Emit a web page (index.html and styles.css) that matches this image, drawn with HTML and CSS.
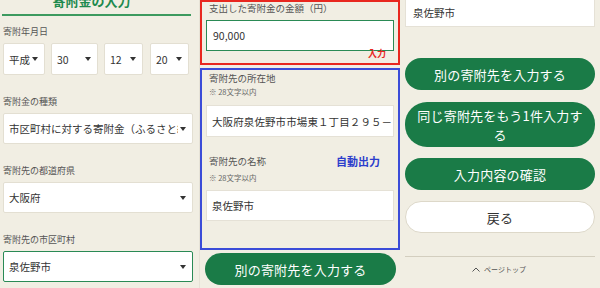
FILE: index.html
```html
<!DOCTYPE html>
<html lang="ja">
<head>
<meta charset="utf-8">
<link rel="stylesheet" href="styles.css">
</head>
<body>
<div class="screens">
  <section class="panel p1">
    <h1 class="title">寄附金の入力</h1>
    <div class="rule"></div>
    <div class="field first">
      <div class="label">寄附年月日</div>
      <div class="date-row">
        <div class="select w-era"><span class="val">平成</span><i class="arrow"></i></div>
        <div class="select w-yr"><span class="val">30</span><i class="arrow"></i></div>
        <div class="select w-md"><span class="val">12</span><i class="arrow"></i></div>
        <div class="select w-md"><span class="val">20</span><i class="arrow"></i></div>
      </div>
    </div>
    <div class="field">
      <div class="label">寄附金の種類</div>
      <div class="select"><span class="val">市区町村に対する寄附金（ふるさと納税）</span><i class="arrow"></i></div>
    </div>
    <div class="field">
      <div class="label">寄附先の都道府県</div>
      <div class="select"><span class="val">大阪府</span><i class="arrow"></i></div>
    </div>
    <div class="field">
      <div class="label">寄附先の市区町村</div>
      <div class="select active"><span class="val">泉佐野市</span><i class="arrow"></i></div>
    </div>
  </section>

  <section class="panel p2">
    <div class="redbox">
      <div class="label2 first-label">支出した寄附金の金額（円）</div>
      <div class="input active">90,000</div>
      <div class="note-red">入力</div>
    </div>
    <div class="bluebox">
      <div class="label2 addr-label">寄附先の所在地</div>
      <div class="hint">※ 28文字以内</div>
      <div class="input addr">大阪府泉佐野市市場東１丁目２９５－３</div>
      <div class="label-row">
        <span class="label2">寄附先の名称</span>
        <span class="note-blue">自動出力</span>
      </div>
      <div class="hint">※ 28文字以内</div>
      <div class="input name">泉佐野市</div>
    </div>
    <div class="btn green p2btn">別の寄附先を入力する</div>
  </section>

  <section class="panel p3">
    <div class="input top">泉佐野市</div>
    <div class="btn green b1">別の寄附先を入力する</div>
    <div class="btn green b2">同じ寄附先をもう1件入力する</div>
    <div class="btn green b3">入力内容の確認</div>
    <div class="btn white b4">戻る</div>
    <div class="divider"></div>
    <div class="pagetop">
      <svg class="caret" width="8" height="5" viewBox="0 0 8 5"><path d="M0.5 4.5 L4 1 L7.5 4.5" fill="none" stroke="#555" stroke-width="1"/></svg>
      <span>ページトップ</span>
    </div>
  </section>
</div>
</body>
</html>
```

FILE: styles.css
```css
* { box-sizing: border-box; margin: 0; padding: 0; }

body {
  margin: 0;
  width: 600px;
  height: 288px;
  overflow: hidden;
  background: #f1eee3;
  font-family: "Noto Sans CJK JP", "Noto Sans", sans-serif;
  color: #333;
}

.screens {
  display: grid;
  grid-template-columns: 200px 200px 200px;
  height: 288px;
}

.panel {
  height: 288px;
  overflow: hidden;
  display: flex;
  flex-direction: column;
}

/* ---------- panel 1 ---------- */
.p1 {
  padding: 0 6px 0 2px;
  border-right: 1px solid #e6e2d6;
}

.title {
  margin-top: -8px;
  height: 18px;
  line-height: 18px;
  font-size: 13px;
  font-weight: bold;
  color: #1e8a4e;
  text-align: center;
  padding-right: 12px;
}

.rule {
  margin-top: 4px;
  height: 2px;
  background: #3d9a5f;
  margin-right: 2px;
}

.field { margin-top: 19px; display: flex; flex-direction: column; }
.field.first { margin-top: 8px; }

.label {
  height: 16px;
  line-height: 16px;
  font-size: 9px;
  color: #555;
  margin-left: 1px;
  margin-bottom: 3px;
}

.date-row {
  display: flex;
  gap: 6px;
  margin-left: 1px;
}

.select {
  height: 31px;
  background: #fff;
  border: 1px solid #e3dfd2;
  border-radius: 2px;
  display: flex;
  align-items: center;
  padding: 0 6px 0 5px;
  font-size: 10.5px;
  color: #333;
  margin-left: 1px;
}
.date-row .select { margin-left: 0; height: 32px; }
.select .val {
  flex: 1;
  overflow: hidden;
  white-space: nowrap;
}
.select .arrow {
  flex: none;
  width: 0;
  height: 0;
  border-top: 4px solid #333;
  border-left: 3px solid transparent;
  border-right: 3px solid transparent;
  margin-left: 2px;
}
.select.active { border: 1.5px solid #2a8a55; }

.w-era { width: 42px; }
.w-yr { width: 47px; }
.w-md { width: 39px; }
.date-row .w-md:last-child { margin-left: 1px; }

/* ---------- panel 2 ---------- */
.redbox {
  height: 65px;
  border: 2px solid #e8271f;
  padding: 0 4px;
  display: flex;
  flex-direction: column;
}

.label2 {
  line-height: 16px;
  height: 16px;
  font-size: 9.5px;
  color: #555;
  margin-left: 3px;
}
.first-label { margin-top: -2px; }

.input {
  height: 31px;
  background: #fff;
  border: 1px solid #e5e1d6;
  display: flex;
  align-items: center;
  padding-left: 5px;
  font-size: 10.5px;
  color: #333;
  white-space: nowrap;
  overflow: hidden;
}
.input.active {
  margin-top: 4px;
  border: 1.5px solid #2a8a55;
  padding-left: 6px;
}

.note-red {
  align-self: flex-end;
  margin-top: -2px;
  margin-right: 8px;
  font-size: 9px;
  line-height: 10px;
  font-weight: bold;
  color: #e8271f;
}

.bluebox {
  margin-top: 3px;
  height: 182px;
  border: 2px solid #3b4cd8;
  padding: 0 4px;
  display: flex;
  flex-direction: column;
}

.hint {
  line-height: 12px;
  height: 12px;
  font-size: 7.5px;
  color: #666;
  margin-left: 3px;
}

.input.addr { margin-top: 7px; height: 32px; letter-spacing: 0.1px; }

.label-row {
  margin-top: 16px;
  display: flex;
  justify-content: space-between;
  align-items: center;
  padding-right: 14px;
  margin-bottom: 3px;
}
.note-blue {
  font-size: 11px;
  font-weight: bold;
  color: #2c3dcc;
  line-height: 16px;
}

.input.name { margin-top: 6px; }

.btn {
  height: 32px;
  border-radius: 16px;
  display: flex;
  align-items: center;
  justify-content: center;
  text-align: center;
  font-size: 13px;
  letter-spacing: 0.2px;
  flex: none;
}
.btn.green { background: #1a7b47; color: #fff; }
.btn.white {
  background: #fff;
  color: #333;
  border: 1px solid #ddd8c9;
}

.p2btn { margin: 3px 4px 0 5px; }

/* ---------- panel 3 ---------- */
.p3 { padding: 0 5px; }

.input.top {
  margin-top: -5px;
  height: 32px;
  padding-left: 7px;
  padding-top: 2px;
  flex: none;
}

.b1 { margin-top: 31px; }
.b2 {
  margin-top: 12px;
  height: 45px;
  border-radius: 22px;
  padding: 0 10px;
  line-height: 19px;
}
.b3 { margin-top: 11px; }
.b4 { margin-top: 11px; }

.divider {
  margin-top: 23px;
  height: 1px;
  background: #d3cebf;
  flex: none;
}

.pagetop {
  margin-top: 6px;
  height: 12px;
  display: flex;
  align-items: center;
  justify-content: center;
  gap: 4px;
  font-size: 7px;
  color: #555;
  padding-right: 2px;
}
.caret { display: block; }
```
